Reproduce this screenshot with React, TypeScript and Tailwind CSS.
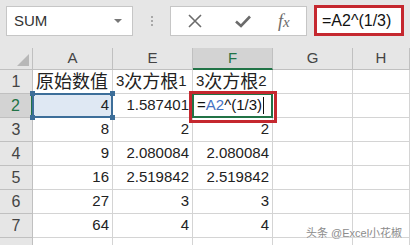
import React from "react";

const cols = ["A", "E", "F", "G", "H"];

const rows: (string | null)[][] = [
  ["原始数值", "3次方根1", "3次方根2", null, null],
  ["4", "1.587401", "", null, null],
  ["8", "2", "2", null, null],
  ["9", "2.080084", "2.080084", null, null],
  ["16", "2.519842", "2.519842", null, null],
  ["27", "3", "3", null, null],
  ["64", "4", "4", null, null],
  [null, null, null, null, null],
];

function Cjk({ text }: { text: string }) {
  // bigger CJK glyphs, latin stays at base size
  const parts = text.split(/([\u4e00-\u9fff]+)/);
  return (
    <>
      {parts.map((p, i) =>
        /[\u4e00-\u9fff]/.test(p) ? (
          <span key={i} className="text-[18px] leading-none">{p}</span>
        ) : (
          <span key={i} className="text-[15px]">{p}</span>
        )
      )}
    </>
  );
}

function Handle({ className }: { className: string }) {
  return <div className={`absolute w-[5px] h-[5px] bg-[#3d6e99] ${className}`} />;
}

export default function App() {
  return (
    <div className="w-[410px] h-[245px] overflow-hidden bg-white relative font-['Liberation_Sans','Noto_Sans_CJK_SC',sans-serif] text-[14px] text-[#222]">
      {/* formula bar */}
      <div className="h-[48px] bg-[#e6e6e6] flex items-start pt-[6px]">
        <div className="ml-[6px] w-[127px] h-[30px] bg-white border border-[#c6c6c6] flex items-center justify-between pl-[7px] pr-[10px]">
          <span className="text-[15px] text-[#333]">SUM</span>
          <div className="w-0 h-0 border-l-[4px] border-r-[4px] border-t-[4px] border-l-transparent border-r-transparent border-t-[#777]" />
        </div>
        <div className="w-[37px] h-[30px] flex flex-col items-center justify-center gap-[2px]">
          <div className="w-[2px] h-[2px] bg-[#a8a8a8]" />
          <div className="w-[2px] h-[2px] bg-[#a8a8a8]" />
          <div className="w-[2px] h-[2px] bg-[#a8a8a8]" />
        </div>
        <div className="w-[137px] h-[30px] bg-white border border-[#c6c6c6] flex items-center">
          <svg className="ml-[17px]" width="14" height="14" viewBox="0 0 14 14">
            <path d="M1 1 L13 13 M13 1 L1 13" stroke="#6b6b6b" strokeWidth="1.6" fill="none" />
          </svg>
          <svg className="ml-[33px]" width="16" height="13" viewBox="0 0 16 13">
            <path d="M1 6.5 L6 11 L15 1.5" stroke="#6b6b6b" strokeWidth="2.6" fill="none" />
          </svg>
          <span className="ml-[27px] font-['Liberation_Serif',serif] italic text-[18px] text-[#6b6b6b] leading-none">
            f<span className="text-[15px]">x</span>
          </span>
        </div>
        <div className="ml-[7px] -mt-[1px] w-[90px] h-[31px] bg-white border-[3px] border-[#c5282f] flex items-center pl-[5px]">
          <span className="text-[16px] text-[#111]">=A2^(1/3)</span>
        </div>
      </div>

      {/* sheet */}
      <div className="grid grid-cols-[33px_80px_80px_80px_80px_1fr] grid-rows-[22px_repeat(8,24px)]">
        {/* corner */}
        <div className="bg-[#e6e6e6] border-r border-b border-[#c0c0c0] relative">
          <svg className="absolute right-[3px] bottom-[3px]" width="12" height="12" viewBox="0 0 12 12">
            <path d="M12 0 L12 12 L0 12 Z" fill="#b8b8b8" />
          </svg>
        </div>
        {cols.map((c) =>
          c === "F" ? (
            <div key={c} className="bg-[#d3d3d3] border-r border-[#c0c0c0] border-b-2 border-b-[#217346] flex items-center justify-center text-[15px] text-[#217346]">
              {c}
            </div>
          ) : (
            <div key={c} className="bg-[#e6e6e6] border-r border-b border-[#c0c0c0] flex items-center justify-center text-[15px] text-[#444]">
              {c}
            </div>
          )
        )}

        {rows.map((r, ri) => {
          const n = ri + 1;
          return (
            <React.Fragment key={ri}>
              {n === 2 ? (
                <div className="bg-[#d3d3d3] border-b border-[#c0c0c0] border-r-2 border-r-[#217346] flex items-center justify-center text-[16px] text-[#217346]">
                  {n}
                </div>
              ) : (
                <div className="bg-[#e6e6e6] border-r border-b border-[#c0c0c0] flex items-center justify-center text-[16px] text-[#444]">
                  {n < 8 ? n : ""}
                </div>
              )}
              {r.map((v, ci) => {
                if (n === 2 && ci === 0) {
                  return (
                    <div key={ci} className="relative border-r border-b border-[#d4d4d4] bg-[#dfe8f3] flex items-center justify-end pr-[3px]">
                      <div className="absolute inset-[-1px] border-2 border-[#3d6e99]" />
                      <Handle className="-left-[3px] -top-[3px]" />
                      <Handle className="-right-[3px] -top-[3px]" />
                      <Handle className="-left-[3px] -bottom-[3px]" />
                      <Handle className="-right-[3px] -bottom-[3px]" />
                      <span className="relative text-[15px]">{v}</span>
                    </div>
                  );
                }
                if (n === 2 && ci === 2) {
                  return (
                    <div key={ci} className="relative border-r border-b border-[#d4d4d4] bg-white flex items-center pl-[4px]">
                      <div className="absolute inset-[-1px] border-2 border-[#217346]" />
                      <span className="relative text-[15px] text-[#111]">
                        =<span className="text-[#4472c4]">A2</span>^(1/3)
                      </span>
                      <div className="relative w-px h-[17px] bg-[#111] ml-[1px]" />
                      <div className="absolute -left-[4px] -right-[5px] -top-[3px] -bottom-[6px] border-[3px] border-[#c5282f]" />
                    </div>
                  );
                }
                const isHeader = n === 1;
                return (
                  <div
                    key={ci}
                    className={`border-r border-b border-[#d4d4d4] flex items-center whitespace-nowrap overflow-visible ${
                      isHeader ? "justify-start pl-[3px]" : "justify-end pr-[3px]"
                    }`}
                  >
                    {v && (isHeader ? <Cjk text={v} /> : <span className="text-[15px]">{v}</span>)}
                  </div>
                );
              })}
            </React.Fragment>
          );
        })}
      </div>

      {/* watermark */}
      <div className="absolute left-[306px] top-[226px] text-[11px] leading-[14px] text-[#8c8c8c] [text-shadow:0_0_2px_#fff,0_0_1px_#fff] whitespace-nowrap">
        头条 @Excel小花椒
      </div>
    </div>
  );
}
